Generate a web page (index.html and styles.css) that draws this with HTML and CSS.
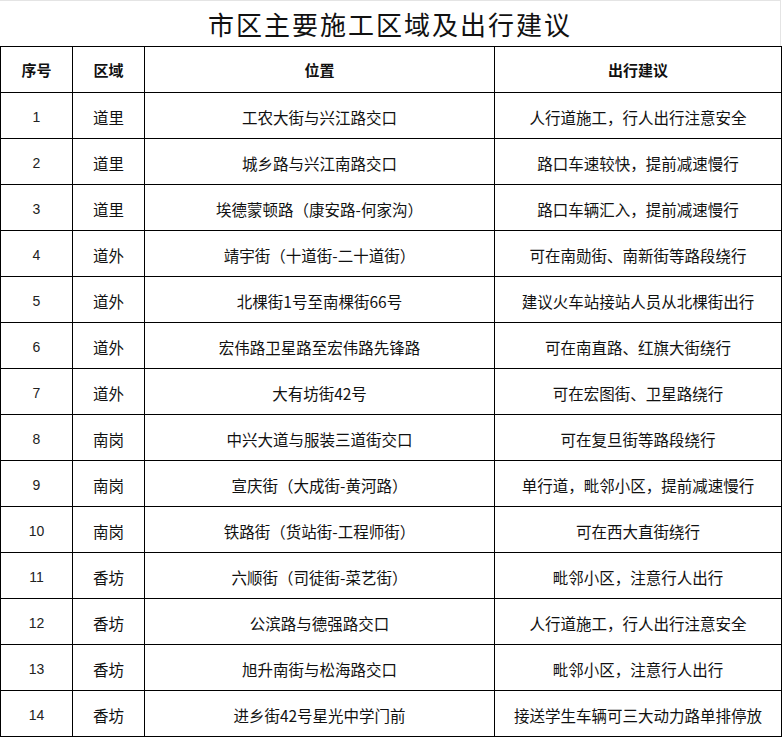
FILE: index.html
```html
<!DOCTYPE html>
<html lang="zh">
<head>
<meta charset="utf-8">
<title>市区主要施工区域及出行建议</title>
<link rel="stylesheet" href="styles.css">
</head>
<body>
<div class="sheet">
  <h1 class="title">市区主要施工区域及出行建议</h1>
  <table class="grid">
    <colgroup>
      <col class="c-no"><col class="c-area"><col class="c-loc"><col class="c-tip">
    </colgroup>
    <thead>
      <tr><th>序号</th><th>区域</th><th>位置</th><th>出行建议</th></tr>
    </thead>
    <tbody>
      <tr><td class="num">1</td><td>道里</td><td>工农大街与兴江路交口</td><td>人行道施工，行人出行注意安全</td></tr>
      <tr><td class="num">2</td><td>道里</td><td>城乡路与兴江南路交口</td><td>路口车速较快，提前减速慢行</td></tr>
      <tr><td class="num">3</td><td>道里</td><td>埃德蒙顿路（康安路-何家沟）</td><td>路口车辆汇入，提前减速慢行</td></tr>
      <tr><td class="num">4</td><td>道外</td><td>靖宇街（十道街-二十道街）</td><td>可在南勋街、南新街等路段绕行</td></tr>
      <tr><td class="num">5</td><td>道外</td><td>北棵街1号至南棵街66号</td><td>建议火车站接站人员从北棵街出行</td></tr>
      <tr><td class="num">6</td><td>道外</td><td>宏伟路卫星路至宏伟路先锋路</td><td>可在南直路、红旗大街绕行</td></tr>
      <tr><td class="num">7</td><td>道外</td><td>大有坊街42号</td><td>可在宏图街、卫星路绕行</td></tr>
      <tr><td class="num">8</td><td>南岗</td><td>中兴大道与服装三道街交口</td><td>可在复旦街等路段绕行</td></tr>
      <tr><td class="num">9</td><td>南岗</td><td>宣庆街（大成街-黄河路）</td><td>单行道，毗邻小区，提前减速慢行</td></tr>
      <tr><td class="num">10</td><td>南岗</td><td>铁路街（货站街-工程师街）</td><td>可在西大直街绕行</td></tr>
      <tr><td class="num">11</td><td>香坊</td><td>六顺街（司徒街-菜艺街）</td><td>毗邻小区，注意行人出行</td></tr>
      <tr><td class="num">12</td><td>香坊</td><td>公滨路与德强路交口</td><td>人行道施工，行人出行注意安全</td></tr>
      <tr><td class="num">13</td><td>香坊</td><td>旭升南街与松海路交口</td><td>毗邻小区，注意行人出行</td></tr>
      <tr><td class="num">14</td><td>香坊</td><td>进乡街42号星光中学门前</td><td>接送学生车辆可三大动力路单排停放</td></tr>
    </tbody>
  </table>
</div>
</body>
</html>
```
FILE: styles.css
```css
html, body {
  margin: 0;
  padding: 0;
  background: #fff;
}
.sheet {
  width: 781px;
  font-family: "Noto Sans CJK SC", "Noto Sans", sans-serif;
  color: #111;
}
.title {
  margin: 0;
  height: 46px;
  box-sizing: border-box;
  border-top: 1px solid #e4e4e4;
  border-right: 1px solid #e4e4e4;
  line-height: 46px;
  text-align: center;
  font-size: 26px;
  font-weight: 400;
  letter-spacing: 2px;
  color: #111;
}
.grid {
  width: 781px;
  border-collapse: collapse;
  table-layout: fixed;
}
.c-no { width: 72px; }
.c-area { width: 72px; }
.c-loc { width: 350px; }
.c-tip { width: 287px; }
.grid th,
.grid td {
  border: 1px solid #000;
  padding: 0;
  text-align: center;
  vertical-align: middle;
  white-space: nowrap;
}
.grid th {
  height: 45px;
  font-size: 15px;
  font-weight: 700;
  color: #111;
}
.grid td {
  height: 46px;
  font-size: 15.5px;
  font-weight: 400;
  padding-top: 2px;
  box-sizing: border-box;
}
.grid td.num {
  font-family: "Liberation Sans", "Noto Sans CJK SC", sans-serif;
  font-size: 14px;
  color: #222;
}
```
